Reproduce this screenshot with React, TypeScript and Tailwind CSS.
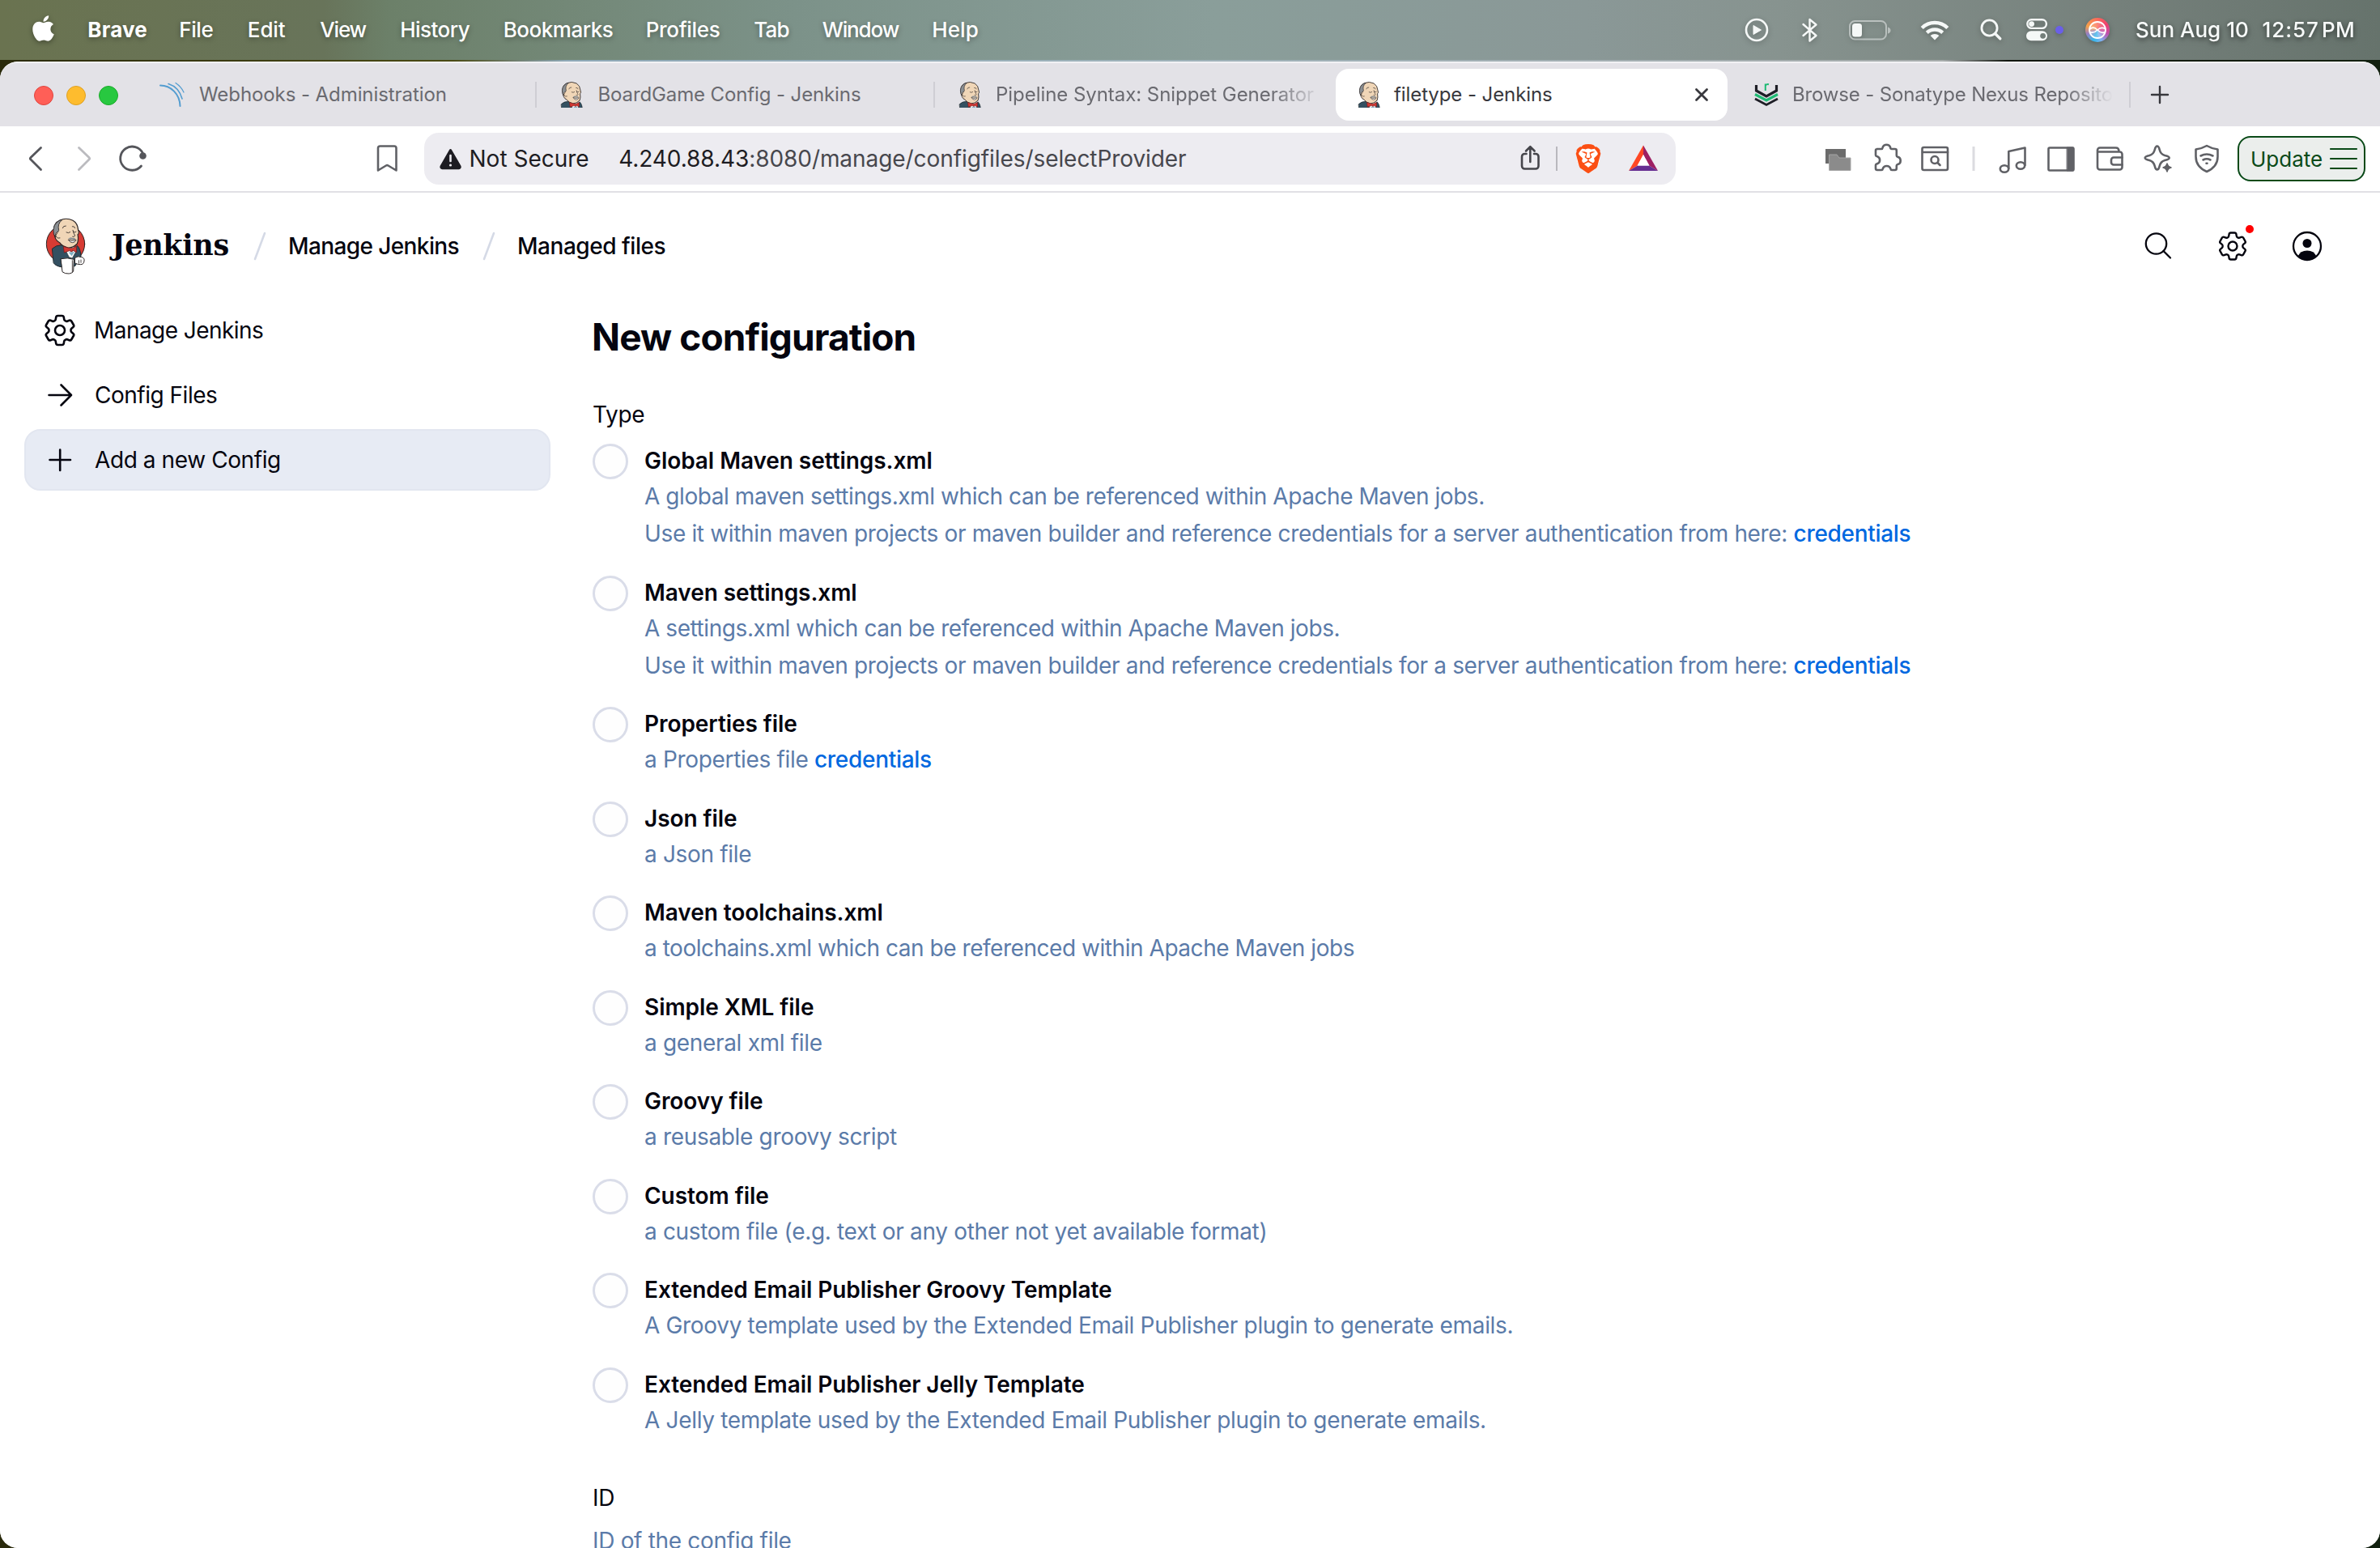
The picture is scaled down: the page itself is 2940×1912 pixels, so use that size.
import React from "react";
import { FaApple } from "react-icons/fa";
import { SiBrave } from "react-icons/si";
import { HiOutlineCog6Tooth } from "react-icons/hi2";

function Butler({ className, viewBox, badge }: { className: string; viewBox: string; badge?: boolean }) {
  return (
    <svg className={className} viewBox={viewBox} fill="none" strokeLinejoin="round" strokeLinecap="round">
      {badge && <ellipse cx="125" cy="135" rx="71" ry="71" fill="#d73b33" stroke="#2a2424" strokeWidth="3" />}
      <path d="M76 152 q14 -13 34 -13 l40 22 18 -20 q12 10 14 40 l-22 36 -44 4 q-26 -2 -35 -15 z" fill="#335061" stroke="#1f2a30" strokeWidth="3" />
      <path d="M120 148 l18 36 12 4 14 -26 -6 -22 z" fill="#fff" stroke="#1f2a30" strokeWidth="2" />
      <path d="M136 166 l12 14 10 -16 z" fill="#81b0c4" />
      <path d="M83 92 Q76 60 104 47 Q128 36 152 48 Q170 58 172 84 Q177 96 170 100 Q174 118 168 134 Q152 150 134 149 Q112 144 103 130 Q84 122 83 92z" fill="#f0d6b7" stroke="#2a2424" strokeWidth="3.5" />
      <path d="M81 98 Q74 62 104 47 L112 46 Q94 60 100 84 L96 92 Q86 90 88 108z" fill="#8a8f93" stroke="#2a2424" strokeWidth="2.5" />
      <path d="M94 96 q-9 4 -4 12 q6 8 14 5" fill="#f0d6b7" stroke="#2a2424" strokeWidth="2.5" />
      <path d="M114 76 q2 -9 12 -8 M150 70 q8 -2 10 6 M128 92 q8 5 14 -1 M154 90 q5 4 10 0 M152 84 q2 12 8 20 q-2 6 -9 4" stroke="#2a2424" strokeWidth="2.5" />
      <path d="M136 120 q12 6 28 0 q-4 10 -14 10 q-9 0 -14 -10z" fill="#fff" stroke="#2a2424" strokeWidth="2.5" />
      <path d="M134 116 q10 -8 16 -3 q10 -3 13 5 q-16 3 -29 -2z" fill="#8a8f93" />
      <path d="M117 145 l3 22 22 -8 1 4 7 0 1 -5 14 8 1 -22 -16 7 -8 0z" fill="#d33833" stroke="#7c1c1c" strokeWidth="2.5" />
      {badge && (
        <g stroke="#2a2424" strokeWidth="3" fill="#fff">
          <path d="M160 186 q12 -8 24 -2 q12 2 10 14 q-2 14 -14 13 q-12 0 -20 -5z" />
          <path d="M108 190 q24 -6 48 2 l-2 44 q-4 8 -16 9 q-16 1 -24 -6 z" />
          <path d="M150 196 v44 M174 196 v10 M182 194 v10" strokeWidth="2.5" />
        </g>
      )}
    </svg>
  );
}

const MENUS = [
  { label: "File", cls: "w-[84.5px] tracking-[-0.4px]" },
  { label: "Edit", cls: "w-[89.5px] tracking-[-0.1px]" },
  { label: "View", cls: "w-[99px] tracking-[-1.2px]" },
  { label: "History", cls: "w-[127.4px] tracking-[-0.55px]" },
  { label: "Bookmarks", cls: "w-[176px] tracking-[-0.48px]" },
  { label: "Profiles", cls: "w-[133.5px] tracking-[-0.32px]" },
  { label: "Tab", cls: "w-[84.5px] tracking-[-0.7px]" },
  { label: "Window", cls: "w-[135.5px] tracking-[-1.12px]" },
  { label: "Help", cls: "tracking-[0.1px]" },
];

function MenuBar() {
  return (
    <div className="flex h-[74px] shrink-0 items-center bg-[linear-gradient(90deg,#6a7350_0px,#68745a_400px,#6c8069_480px,#7c9289_980px,#8a9e9a_1500px,#8a9897_1960px,#87938f_2200px,#747f7a_2640px,#66736c_2940px)] pb-px pl-10 text-[26px] font-medium text-white [text-shadow:0_2px_6px_rgba(0,0,0,0.35)]">
      <FaApple className="-mt-1 h-9 w-[27px] drop-shadow-[0_2px_3px_rgba(0,0,0,0.35)]" />
      <span className="ml-[41.3px] w-[113px] font-bold tracking-[0.2px]">Brave</span>
      {MENUS.map((m) => (
        <span key={m.label} className={m.cls}>{m.label}</span>
      ))}
      <div className="ml-auto flex items-center drop-shadow-[0_2px_3px_rgba(0,0,0,0.25)]">
        <svg className="h-10 w-[34px]" viewBox="2153 17 34 40">
          <circle cx="2170" cy="37" r="13" fill="none" stroke="#f5f8f7" strokeWidth="2.6" />
          <path d="M2166 31.5 v11 l9.5 -5.5z" fill="#f5f8f7" stroke="#f5f8f7" strokeLinejoin="round" />
        </svg>
        <svg className="ml-[35px] h-10 w-7" viewBox="2222 17 28 40" fill="none" stroke="#f5f8f7" strokeWidth="2.4" strokeLinejoin="round" strokeLinecap="round">
          <path d="M2227.5 30 L2243.5 44 L2235.5 50.5 V24 L2243.5 30.5 L2227.5 44" />
        </svg>
        <svg className="ml-[31px] h-10 w-14" viewBox="2281 17 56 40">
          <rect x="2285" y="26" width="45" height="22.5" rx="6.5" fill="none" stroke="#f5f8f7" strokeOpacity=".5" strokeWidth="2" />
          <rect x="2288" y="29" width="12" height="16.5" rx="3.5" fill="#f5f8f7" />
          <path d="M2332 33.5 q3.5 1 3.5 4 t-3.5 4z" fill="#f5f8f7" fillOpacity=".5" />
        </svg>
        <svg className="ml-[33px] h-10 w-10" viewBox="2370 17 40 40" fill="none" stroke="#f5f8f7" strokeWidth="4.4">
          <path d="M2374.2 34.5 a22.5 22.5 0 0 1 31.6 0" />
          <path d="M2380.3 40.4 a14 14 0 0 1 19.4 0" />
          <path d="M2390 49.5 l-5.4 -5.4 a7.8 7.8 0 0 1 10.8 0z" fill="#f5f8f7" stroke="none" />
        </svg>
        <svg className="ml-[34px] h-10 w-8" viewBox="2444 17 32 40" fill="none" stroke="#f5f8f7" strokeWidth="2.8" strokeLinecap="round">
          <circle cx="2457.5" cy="34.5" r="9.6" />
          <path d="M2464.8 41.8 l6 6" strokeWidth="3.4" />
        </svg>
        <svg className="ml-[24px] h-10 w-[50px]" viewBox="2500 17 50 40">
          <rect x="2504.3" y="24.3" width="23.6" height="10.6" rx="5.3" fill="none" stroke="#f5f8f7" strokeWidth="2.4" />
          <circle cx="2509.6" cy="29.6" r="3.4" fill="#f5f8f7" />
          <rect x="2503" y="38.3" width="26" height="12" rx="6" fill="#f5f8f7" />
          <circle cx="2523.6" cy="44.3" r="3.4" fill="#747f7a" />
          <circle cx="2544" cy="37" r="5" fill="#6a5fe8" />
        </svg>
        <div className="ml-[26px] flex size-[30px] items-center justify-center rounded-full bg-[conic-gradient(from_0deg,#fb6a5a,#ee3f6e_60deg,#c24fae_110deg,#7fb2f0_160deg,#35b7ea_200deg,#9a7fc0_250deg,#f5a24a_290deg,#fb6a5a)]">
          <svg className="size-[30px]" viewBox="0 0 30 30" fill="none" stroke="#fff">
            <circle cx="15" cy="15" r="10" strokeWidth="1.8" fill="#fff" fillOpacity=".2" />
            <path d="M5.500 14 q4.500 -4 9.500 1 t9.500 2.500 M5.500 17.500 q5 2 9.500 -2.500 t9.500 -1.500" strokeWidth="1.700" />
          </svg>
        </div>
        <span className="ml-[32px] w-[156.6px] text-[#f7faf9]">Sun Aug 10</span>
        <span className="w-[73.4px] tracking-[0.9px] text-[#f7faf9]">12:57</span>
        <span className="w-[72px] tracking-[0.3px] text-[#f7faf9]">PM</span>
      </div>
    </div>
  );
}

const HEAD_BOX = "64 40 118 130";

function TabStrip() {
  return (
    <div className="flex h-20 shrink-0 items-center rounded-t-[20px] border-t-2 border-[#f1f1f4] bg-[#e3e2e7] text-[24px] text-[#6a6a70]">
      <div className="mt-0.5 flex gap-4 pl-[42px]">
        <span className="size-6 rounded-full border border-[#e0443e] bg-[#ff5f57]" />
        <span className="size-6 rounded-full border border-[#dea123] bg-[#febc2e]" />
        <span className="size-6 rounded-full border border-[#1aab29] bg-[#28c840]" />
      </div>
      <div className="ml-[25px] flex h-8 w-[492px] items-center border-r-2 border-[#cfced4] pl-[26px]">
        <svg className="size-8 shrink-0" viewBox="0 0 32 32" fill="none" stroke="#549dd0" strokeLinecap="round">
          <path d="M1 4.5 C14 4.5 25 15 25.5 30" strokeWidth="2" />
          <path d="M11 2.5 C19 5 25.500 12 28 21" strokeWidth="1.6" />
          <path d="M20 1.500 C24.500 4.500 28 8.500 30 13" strokeWidth="1.3" />
        </svg>
        <span className="ml-[17px] tracking-[-0.08px]">Webhooks - Administration</span>
      </div>
      <div className="flex h-8 w-[492px] items-center border-r-2 border-[#cfced4] pl-[27px]">
        <Butler className="h-8 w-[30px] shrink-0" viewBox={HEAD_BOX} />
        <span className="ml-[18.5px] tracking-[-0.12px]">BoardGame Config - Jenkins</span>
      </div>
      <div className="flex h-8 w-[495px] items-center pl-[27px]">
        <Butler className="h-8 w-[30px] shrink-0" viewBox={HEAD_BOX} />
        <span className="ml-[18px] w-[396px] whitespace-nowrap tracking-[-0.05px] [mask-image:linear-gradient(90deg,#000_86%,transparent_102%)]">
          Pipeline Syntax: Snippet Generator
        </span>
      </div>
      <div className="flex h-16 w-[484px] items-center rounded-[16px] bg-white pl-[25px] text-[#38383d]">
        <Butler className="h-8 w-[30px] shrink-0" viewBox={HEAD_BOX} />
        <span className="ml-[17px] tracking-[-0.09px]">filetype - Jenkins</span>
        <svg className="mr-[22px] ml-auto size-5" viewBox="0 0 20 20" stroke="#38383d" strokeWidth="2.8" strokeLinecap="round">
          <path d="M3.500 3.500 L16.500 16.500 M16.500 3.500 L3.500 16.500" />
        </svg>
      </div>
      <div className="flex h-8 w-[498px] items-center border-r-2 border-[#cfced4] pl-[32px]">
        <svg className="size-8 shrink-0" viewBox="0 0 32 32" fill="none" strokeWidth="3.200">
          <path d="M3.500 4 V11 L16 18 L28.500 11 V4" stroke="#1e1e26" />
          <path d="M2 15.500 L16 23 L30 15.500" stroke="#1fba74" />
          <path d="M2 21 L16 28.500 L30 21" stroke="#1e1e26" strokeWidth="2.800" />
          <path d="M14.800 11 V2.500 M14.800 5 q1 -2.500 4.200 -1.800" stroke="#1fba74" strokeWidth="2" />
        </svg>
        <span className="ml-[16px] w-[396px] overflow-hidden whitespace-nowrap tracking-[-0.15px] [mask-image:linear-gradient(90deg,#000_85%,transparent_100%)]">
          Browse - Sonatype Nexus Repository
        </span>
      </div>
      <svg className="ml-[24px] size-6" viewBox="0 0 24 24" stroke="#38383d" strokeWidth="2.400" strokeLinecap="round">
        <path d="M12 2 V22 M2 12 H22" />
      </svg>
    </div>
  );
}

function Toolbar() {
  return (
    <div className="flex h-[82px] shrink-0 items-center border-b-2 border-[#e1e0e5] bg-white">
      <svg className="ml-[30px] h-10 w-[470px]" viewBox="30 176 470 40" fill="none" stroke="#55565b" strokeWidth="2.800" strokeLinecap="round" strokeLinejoin="round">
        <path d="M50.500 182.500 L38 194.500 q-1.300 1.300 0 2.600 L50.500 209.500" />
        <path d="M97.500 182.500 L110 194.500 q1.300 1.300 0 2.600 L97.500 209.500" stroke="#bbbbbf" />
        <path d="M176.500 189.500 A14.600 14.600 0 1 0 174.500 205" />
        <circle cx="176.500" cy="192.500" r="4.300" fill="#55565b" stroke="none" />
        <path d="M467 183 a2.500 2.500 0 0 1 2.500 -2.500 h17.500 a2.500 2.500 0 0 1 2.500 2.500 v27.500 l-10 -6 q-1.300 -.8 -2.600 0 l-9.900 6z" stroke="#606166" strokeWidth="2.600" />
      </svg>
      <div className="ml-6 flex h-16 w-[1546px] items-center rounded-[18px] bg-[#edecf1] text-[28px]">
        <svg className="ml-[17px] h-10 w-8" viewBox="541 176 32 40">
          <path d="M556.500 185.500 L545 205.500 a1.500 1.500 0 0 0 1.300 2.200 h20.500 a1.500 1.500 0 0 0 1.300 -2.200z" fill="#1d1c22" stroke="#1d1c22" strokeWidth="3" strokeLinejoin="round" />
          <path d="M556.500 192 v7" stroke="#edecf1" strokeWidth="2.600" strokeLinecap="round" />
          <circle cx="556.500" cy="204" r="1.600" fill="#edecf1" />
        </svg>
        <span className="ml-[6.500px] text-[#1d1c22]">Not Secure</span>
        <span className="ml-[36.500px] tracking-[-0.07px] text-[#47474d]">
          <span className="text-[#1d1c22]">4.240.88.43</span>:8080/manage/configfiles/selectProvider
        </span>
        <svg className="ml-auto h-10 w-[56px]" viewBox="1872 176 56 40" fill="none" stroke="#45454b" strokeWidth="2.600" strokeLinecap="round" strokeLinejoin="round">
          <path d="M1885.500 190 h-2 a3.500 3.500 0 0 0 -3.500 3.500 v11.500 a3.500 3.500 0 0 0 3.500 3.500 h13.500 a3.500 3.500 0 0 0 3.500 -3.500 v-11.500 a3.500 3.500 0 0 0 -3.500 -3.500 h-2 M1890.300 200 V181.500 M1885 186.500 l5.300 -5.300 5.300 5.300" />
          <path d="M1923 181 V211" stroke="#b9b8be" strokeWidth="2" strokeLinecap="butt" />
        </svg>
        <div className="ml-[16px] flex h-9 w-9 items-center justify-center">
          <SiBrave className="size-9 rounded-full bg-[radial-gradient(circle,#fff_55%,transparent_56%)] text-[#fb4f14]" />
        </div>
        <svg className="mr-[20px] ml-[30px] h-10 w-10" viewBox="2010 176 40 40">
          <path d="M2030 179.500 L2012 211 L2023 204.500 L2030 191z" fill="#ff4724" />
          <path d="M2030 179.500 L2048 211 L2037 204.500 L2030 191z" fill="#9e1f63" />
          <path d="M2012 211 H2048 L2037 204.500 H2023z" fill="#662d91" />
          <path d="M2030 191 L2037.500 204.500 H2022.500z" fill="#fff" />
        </svg>
      </div>
      <svg className="ml-[180px] h-10 w-[500px]" viewBox="2250 176 500 40" fill="none" stroke="#606166" strokeWidth="2.600" strokeLinecap="round" strokeLinejoin="round">
        <g stroke="none">
          <path d="M2255 184 h25 v18 h-25z" fill="#6b6b6b" />
          <path d="M2260 191 h9 l3 4 h14 v15.500 h-26z" fill="#8b8b8b" stroke="#a5a5a5" strokeWidth="1" />
        </g>
        <path d="M2318.500 184 h5.500 c1.800 0 1.500 -1.300 1.800 -2.300 a4.800 4.200 0 0 1 9.200 0 c.3 1 0 2.300 1.800 2.300 h4 a2 2 0 0 1 2 2 v6 c0 1.500 .8 1.500 1.500 1.800 a4.800 4.800 0 0 1 0 9.200 c-.7 .3 -1.500 .300 -1.500 1.800 v3.200 a2 2 0 0 1 -2 2 h-3.800 c-1.800 0 -1.400 -1.300 -1.700 -2 a5 4.600 0 0 0 -9.400 0 c-.3 .7 .1 2 -1.700 2 h-5.200 a2 2 0 0 1 -2 -2 v-4 c0 -1.500 1 -1.300 2 -1.800 a4.800 4.800 0 0 0 0 -9 c-1 -.5 -2 -.300 -2 -1.800 v-5.400 a2 2 0 0 1 2 -2z" />
        <rect x="2374.500" y="182" width="31.500" height="28" rx="2" />
        <path d="M2375 188 h31" />
        <circle cx="2390" cy="197.500" r="4.500" />
        <path d="M2393.500 201 l3 3" />
        <path d="M2438 181 V211" stroke="#dcdce0" strokeWidth="3" strokeLinecap="butt" />
        <ellipse cx="2476" cy="208.500" rx="5.200" ry="4.300" />
        <ellipse cx="2496" cy="204.500" rx="5.200" ry="4.300" />
        <path d="M2481.300 208 V187 L2501.500 182.500 V204" />
        <rect x="2530.500" y="182.500" width="31" height="28" rx="1.500" />
        <path d="M2553.500 182 h8 v29 h-8z" fill="#606166" strokeWidth="1" />
        <path d="M2591 187.500 h27.500 a3 3 0 0 1 3 3 v16 a3 3 0 0 1 -3 3 h-24.500 a3 3 0 0 1 -3 -3 v-21 a3 3 0 0 1 3 -3 h19.500 q4 0 4 4.500" />
        <path d="M2621.500 194.500 h-10.500 a3 3 0 0 0 -3 3 v3 a3 3 0 0 0 3 3 h10.500" />
        <path d="M2664.700 180.500 q2 0 3 4.500 q1.300 5.500 6.500 7 q5.500 1.200 5.500 3 t-5.500 3 q-5.200 1.500 -6.500 7 q-1 4.500 -3 4.500 t-3 -4.500 q-1.300 -5.500 -6.500 -7 q-5.500 -1.200 -5.500 -3 t5.500 -3 q5.200 -1.500 6.500 -7 q1 -4.500 3 -4.500z" />
        <path d="M2677 202 q1 4 5 5 q-4 1 -5 5 q-1 -4 -5 -5 q4 -1 5 -5z" fill="#606166" strokeWidth="1.500" />
        <path d="M2726 180 q6 3.500 13.500 4.500 v9 q0 12.500 -13.500 18.500 q-13.500 -6 -13.500 -18.500 v-9 q7.500 -1 13.500 -4.500z" />
        <path d="M2718.500 192.500 q7.500 -4 15 0 M2721.500 197.500 q4.500 -2.400 9 0 M2725.500 201.800 h1" />
      </svg>
      <div className="ml-[14px] flex h-14 w-[158px] items-center rounded-[16px] border-2 border-[#0a4a18] bg-[#ebeeec] text-[26px] text-[#0a4a18]">
        <span className="ml-[14px]">Update</span>
        <svg className="ml-[8px] h-9 w-9" viewBox="0 0 36 36" stroke="#0a4a18" strokeWidth="2.200" strokeLinecap="round">
          <path d="M2 6 H34 M2 18 H34 M2 30 H34" />
        </svg>
      </div>
    </div>
  );
}

function Slash({ className }: { className: string }) {
  return (
    <svg className={className} viewBox="0 0 16 36" stroke="#d5dae6" strokeWidth="2.600" strokeLinecap="round">
      <path d="M14 2 L2 34" />
    </svg>
  );
}

function PageHeader() {
  return (
    <div className="flex h-[132px] shrink-0 items-center bg-white pl-[56px] text-[28px]">
      <Butler badge className="h-[70px] w-[50px] shrink-0" viewBox="50 38 150 210" />
      <span className="ml-[32px] w-[175px] pb-px font-['DejaVu_Serif'] text-[35px] font-bold tracking-[-0.3px]">Jenkins</span>
      <Slash className="h-9 w-4" />
      <span className="ml-[27px] w-[240px] font-[450] tracking-[-0.6px]">Manage Jenkins</span>
      <Slash className="h-9 w-4" />
      <span className="ml-[27px] font-[450] tracking-[-0.46px]">Managed files</span>
      <svg className="ml-auto h-10 w-10" viewBox="2646 284 40 40" fill="none" stroke="#05050f" strokeWidth="2.300" strokeLinecap="round">
        <circle cx="2663.500" cy="301" r="12.700" />
        <path d="M2672.500 310 l8.500 8.500" />
      </svg>
      <div className="relative ml-[50px] flex size-11 items-center justify-center">
        <HiOutlineCog6Tooth className="size-11 shrink-0 [stroke-width:1.3]" />
        <span className="absolute -top-1 right-0 -mr-[4px] size-[10px] rounded-full bg-[#ff0000]" />
      </div>
      <svg className="mr-[70px] ml-[50px] h-10 w-10" viewBox="2830 284 40 40">
        <circle cx="2850" cy="304" r="17" fill="none" stroke="#05050f" strokeWidth="2.300" />
        <circle cx="2850" cy="300.500" r="5.500" fill="#05050f" />
        <path d="M2838.500 316.500 q3 -7 11.500 -7 t11.500 7 q-5 5 -11.500 5 t-11.500 -5z" fill="#05050f" />
      </svg>
    </div>
  );
}

const Creds = () => <span className="font-medium tracking-[-0.3px] text-[#0068e0]">credentials</span>;

const UseIt = () => (
  <>
    <span className="tracking-[-0.348px]">
      Use it within maven projects or maven builder and reference credentials for a server authentication from here:{" "}
    </span>
    <Creds />
  </>
);

const TYPES: { title: string; lines: React.ReactNode[] }[] = [
  {
    title: "Global Maven settings.xml",
    lines: [
      <span className="tracking-[-0.43px]">A global maven settings.xml which can be referenced within Apache Maven jobs.</span>,
      <UseIt />,
    ],
  },
  {
    title: "Maven settings.xml",
    lines: [
      <span className="tracking-[-0.43px]">A settings.xml which can be referenced within Apache Maven jobs.</span>,
      <UseIt />,
    ],
  },
  { title: "Properties file", lines: [<>a Properties file <Creds /></>] },
  { title: "Json file", lines: ["a Json file"] },
  { title: "Maven toolchains.xml", lines: [<span className="tracking-[-0.455px]">a toolchains.xml which can be referenced within Apache Maven jobs</span>] },
  { title: "Simple XML file", lines: ["a general xml file"] },
  { title: "Groovy file", lines: ["a reusable groovy script"] },
  { title: "Custom file", lines: ["a custom file (e.g. text or any other not yet available format)"] },
  { title: "Extended Email Publisher Groovy Template", lines: ["A Groovy template used by the Extended Email Publisher plugin to generate emails."] },
  { title: "Extended Email Publisher Jelly Template", lines: ["A Jelly template used by the Extended Email Publisher plugin to generate emails."] },
];

function Sidebar() {
  return (
    <div className="flex w-[650px] shrink-0 flex-col gap-1 text-[28px]">
      <div className="flex h-[76px] items-center pl-5">
        <HiOutlineCog6Tooth className="size-12 shrink-0 [stroke-width:1.3]" />
        <span className="ml-[18px] tracking-[-0.55px]">Manage Jenkins</span>
      </div>
      <div className="flex h-[76px] items-center pl-6">
        <svg className="size-10" viewBox="0 0 40 40" fill="none" stroke="#05050f" strokeWidth="2.600" strokeLinecap="round" strokeLinejoin="round">
          <path d="M6.500 20 H34 M21.500 7.500 L34 20 L21.500 32.500" />
        </svg>
        <span className="ml-[23px] tracking-[-0.49px]">Config Files</span>
      </div>
      <div className="flex h-[76px] items-center rounded-[20px] border-2 border-[#e2e6f0] bg-[#e7ebf4] pl-[22px]">
        <svg className="size-10" viewBox="0 0 40 40" fill="none" stroke="#05050f" strokeWidth="2.600" strokeLinecap="round">
          <path d="M7.500 20 H33 M20.200 7.500 V33" />
        </svg>
        <span className="ml-[23px] tracking-[-0.41px]">Add a new Config</span>
      </div>
    </div>
  );
}

export default function App() {
  return (
    <div className="flex h-[1912px] w-[2940px] flex-col overflow-hidden bg-[linear-gradient(90deg,#2a2a0c_0px,#4a4a14_560px,#8fa9b8_700px,#9fb3bb_1400px,#a8adad_2400px,#12160f_2480px,#12200f_2940px)] font-['Inter',sans-serif] text-[#05050f]">
      <MenuBar />
      <div className="mt-0.5 flex h-[1836px] shrink-0 flex-col overflow-hidden rounded-[22px] bg-white">
        <TabStrip />
        <Toolbar />
        <PageHeader />
        <div className="flex flex-1 bg-white pl-[30px]">
          <Sidebar />
          <div className="ml-[52px] flex w-[1800px] flex-col text-[28px]">
            <h1 className="mt-[15px] -ml-px text-[46px] leading-[62px] font-[650] tracking-[-0.9px]">New configuration</h1>
            <div className="mt-[43px] h-[58px] leading-[44px] tracking-[-0.3px]">Type</div>
            {TYPES.map((t) => (
              <div key={t.title} className="mb-[28.3px] flex">
                <span className="size-11 shrink-0 rounded-full border-[3px] border-[#dadde9] bg-[#fefefe]" />
                <div className="pl-[20px]">
                  <div className="h-[42px] leading-[42px] font-semibold tracking-[-0.06px]">{t.title}</div>
                  {t.lines.map((line, i) => (
                    <div key={i} className="h-[46.2px] leading-[46.2px] tracking-[-0.325px] whitespace-nowrap text-[#5b7ba9]">{line}</div>
                  ))}
                </div>
              </div>
            ))}
            <div className="mt-[23px] leading-[44px] tracking-[-0.3px]">ID</div>
            <div className="mt-[8px] leading-[46px] tracking-[-0.32px] text-[#5b7ba9]">ID of the config file</div>
          </div>
        </div>
      </div>
    </div>
  );
}
